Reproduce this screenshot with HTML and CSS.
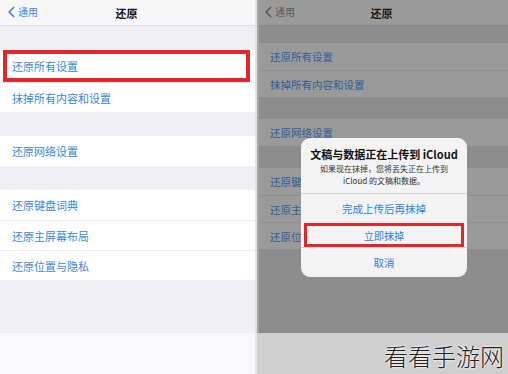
FILE: index.html
```html
<!DOCTYPE html>
<html>
<head>
<meta charset="utf-8">
<link rel="stylesheet" href="styles.css">
</head>
<body>
<div class="page">
  <div class="col left">
    <div class="screen">
      <div class="nav">
        <span class="back"><svg width="7" height="12" viewBox="0 0 7 12"><path d="M6 1 L1.2 6 L6 11" fill="none" stroke="currentColor" stroke-width="1.6"/></svg>通用</span>
        <span class="title">还原</span>
      </div>
      <div class="gap g1"></div>
      <div class="group">
        <div class="row r1 hl">还原所有设置</div>
        <div class="row r2">抹掉所有内容和设置</div>
      </div>
      <div class="gap g2"></div>
      <div class="group">
        <div class="row r3">还原网络设置</div>
      </div>
      <div class="gap g2"></div>
      <div class="group">
        <div class="row r4">还原键盘词典</div>
        <div class="row r4">还原主屏幕布局</div>
        <div class="row r4">还原位置与隐私</div>
      </div>
    </div>
    <div class="foot"></div>
  </div>
  <div class="divider"></div>
  <div class="col right">
    <div class="screen">
      <div class="nav">
        <span class="back"><svg width="7" height="12" viewBox="0 0 7 12"><path d="M6 1 L1.2 6 L6 11" fill="none" stroke="currentColor" stroke-width="1.6"/></svg>通用</span>
        <span class="title">还原</span>
      </div>
      <div class="gap h1"></div>
      <div class="group">
        <div class="row s1">还原所有设置</div>
        <div class="row s1">抹掉所有内容和设置</div>
      </div>
      <div class="gap h2"></div>
      <div class="group">
        <div class="row s1">还原网络设置</div>
      </div>
      <div class="gap h2"></div>
      <div class="group">
        <div class="row s1">还原键盘词典</div>
        <div class="row s1">还原主屏幕布局</div>
        <div class="row s1">还原位置与隐私</div>
      </div>
      <div class="alert">
        <div class="alert-body">
          <div class="alert-title">文稿与数据正在上传到 iCloud</div>
          <div class="alert-msg">如果现在抹掉，您将丢失正在上传到<br>iCloud 的文稿和数据。</div>
        </div>
        <div class="btn">完成上传后再抹掉</div>
        <div class="btn hl2">立即抹掉</div>
        <div class="btn">取消</div>
      </div>
    </div>
    <div class="foot"></div>
  </div>
  <div class="watermark">看看手游网</div>
</div>
</body>
</html>
```
FILE: styles.css
```css
* { box-sizing: border-box; }
html, body { margin: 0; padding: 0; }
body {
  width: 508px;
  height: 374px;
  overflow: hidden;
  font-family: "Noto Sans CJK SC", "Noto Sans", sans-serif;
  background: #fff;
}
.page {
  position: relative;
  display: flex;
  width: 508px;
  height: 374px;
}
.col {
  display: flex;
  flex-direction: column;
}
.left { width: 255px; }
.divider { width: 2px; background: #e2e2e2; }
.right { flex: 1; }
.screen {
  position: relative;
  height: 333px;
  display: flex;
  flex-direction: column;
}
.left .screen { background: #efeff4; }
.right .screen { background: #8d8d8d; border-left: 2px solid #a6a6a6; }
.left .foot { flex: 1; background: #f8f8fa; }
.right .foot { flex: 1; background: #cfcfcf; }

.nav {
  position: relative;
  height: 26px;
  display: flex;
  align-items: center;
  justify-content: center;
}
.left .nav { background: #f7f7f7; border-bottom: 1px solid #dedede; }
.right .nav { background: #9b9b9b; border-bottom: 1px solid #8a8a8a; }
.back {
  position: absolute;
  left: 8px;
  top: 5px;
  display: flex;
  align-items: center;
  gap: 3px;
  font-size: 10px;
  line-height: 14px;
}
.left .back { color: #3b87d6; }
.right .back { color: #5a5a5a; left: 6px; }
.title {
  font-size: 11px;
  font-weight: 700;
  color: #111;
  margin-left: -2px;
}
.right .title { color: #1a1a1a; margin-left: -4px; }

.g1 { height: 24px; }
.g2 { height: 24px; }
.h1 { height: 17px; }
.h2 { height: 22px; }

.group { display: flex; flex-direction: column; }
.left .group { background: #fff; }
.right .group { background: #9a9a9a; }
.row {
  display: flex;
  align-items: center;
  padding-left: 12px;
  font-size: 11px;
  color: #3b87d6;
}
.left .row + .row { border-top: 1px solid #ededed; }
.right .row + .row { border-top: 1px solid #8f8f8f; }
.r1 { height: 32px; }
.r2 { height: 30px; }
.r3 { height: 30px; }
.r4 { height: 30px; }
.right .row { color: #2f5d95; font-size: 10.5px; padding-left: 11px; }
.s1 { height: 27px; }

.hl {
  border: 4px solid #e4262c;
  margin: 0 5px 0 3px;
  padding-left: 5px;
}

.alert {
  position: absolute;
  left: 42px;
  top: 138px;
  width: 166px;
  height: 139px;
  background: #f3f3f3;
  border-radius: 9px;
  display: flex;
  flex-direction: column;
  overflow: hidden;
}
.alert-body {
  height: 55px;
  display: flex;
  flex-direction: column;
  align-items: center;
  padding-top: 9px;
}
.alert-title {
  font-size: 11px;
  font-weight: 700;
  color: #111;
  line-height: 15px;
}
.alert-msg {
  font-size: 8px;
  line-height: 12px;
  color: #333;
  text-align: center;
  margin-top: 1px;
}
.btn {
  flex: 1;
  display: flex;
  align-items: center;
  justify-content: center;
  font-size: 10.5px;
  color: #2f80d8;
  border-top: 1px solid #d0d0d0;
}
.hl2 {
  flex: 0 0 24px;
  border: 3px solid #e4262c;
  margin: 0 3px;
  font-size: 10px;
}

.watermark {
  position: absolute;
  left: 384px;
  top: 340px;
  font-size: 24px;
  font-weight: 300;
  line-height: 32px;
  color: #222;
  white-space: nowrap;
  text-shadow: 0 0 3px #fff, 0 0 2px #fff;
}
```
